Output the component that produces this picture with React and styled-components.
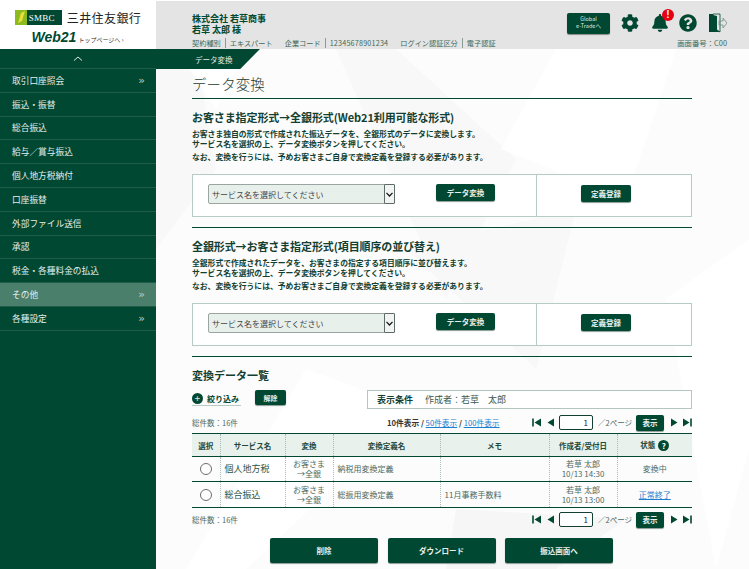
import React from "react";
import styled, { createGlobalStyle } from "styled-components";
import { FaCog, FaBell, FaQuestionCircle } from "react-icons/fa";

const GREEN = "#004831";

const Global = createGlobalStyle`
  html, body { margin: 0; padding: 0; height: 100%; overflow: hidden; }
  body { font-family: "Noto Sans CJK JP", "Noto Sans", sans-serif; color: ${GREEN}; background: #fff; }
  * { box-sizing: border-box; }
`;

const Page = styled.div`
  display: grid;
  grid-template-columns: 156px 1fr;
  grid-template-rows: 49px 1fr;
  width: 749px;
  height: 569px;
  overflow: hidden;
`;

const LogoBox = styled.div`
  display: flex;
  flex-direction: column;
  align-items: center;
  padding-top: 10px;
  background: #fff;
`;

const LogoRow = styled.div`
  display: flex;
  align-items: center;
  gap: 5px;
  height: 15px;
`;

const SmbcMark = styled.div`
  display: flex;
  align-items: center;
  width: 47px;
  height: 15px;
  background: ${GREEN};
  color: #fff;
  font-family: "Liberation Serif", serif;
  font-size: 9px;
  letter-spacing: 0.2px;
`;

const BankName = styled.span`
  font-size: 12px;
  font-weight: 400;
  letter-spacing: 0.4px;
  color: #222;
`;

const WebRow = styled.div`
  display: flex;
  align-items: baseline;
  gap: 2px;
  margin-top: 5px;
  margin-left: -1px;
`;

const WebLogo = styled.span`
  font-family: "Liberation Sans", sans-serif;
  font-size: 14px;
  line-height: 15px;
  font-weight: 700;
  font-style: italic;
  color: ${GREEN};
`;

const TopLink = styled.span`
  font-size: 6px;
  color: #333;
`;

const Header = styled.header`
  display: flex;
  justify-content: space-between;
  margin-top: 1px;
  padding: 12px 7px 0 36px;
  background: #e4e4e4;
`;

const Account = styled.div`
  display: flex;
  flex-direction: column;
`;

const Company = styled.div`
  font-size: 9px;
  line-height: 11px;
  font-weight: 700;
  color: ${GREEN};
`;

const MetaRow = styled.div`
  display: flex;
  align-items: center;
  margin-top: 3px;
  font-size: 7.2px;
  line-height: 10px;
  color: #3d6a5a;
  white-space: nowrap;
`;

const MetaItem = styled.span`
  margin-right: ${(p) => p.$gap || 4}px;
  padding-right: ${(p) => (p.$sep ? 4 : 0)}px;
  border-right: ${(p) => (p.$sep ? "1px solid #8a9a94" : "none")};
  letter-spacing: ${(p) => p.$track || 0}px;
`;

const HeaderRight = styled.div`
  display: flex;
  flex-direction: column;
  align-items: flex-end;
`;

const IconRow = styled.div`
  display: flex;
  align-items: center;
  height: 22px;
  margin-top: -1px;
  margin-right: 15px;
`;

const GlobalButton = styled.div`
  width: 43px;
  height: 21px;
  margin-right: 11px;
  padding-top: 3px;
  border-radius: 2px;
  background: ${GREEN};
  box-shadow: 0 1px 1px #888;
  color: #dfe8e4;
  font-size: 5.5px;
  line-height: 7px;
  text-align: center;
`;

const HeadIcon = styled.span`
  position: relative;
  display: flex;
  margin-right: ${(p) => p.$gap}px;
  color: ${GREEN};
  font-size: ${(p) => p.$size}px;
`;

const Badge = styled.span`
  position: absolute;
  top: -5px;
  right: -5px;
  width: 12px;
  height: 12px;
  border-radius: 50%;
  background: #e60012;
  color: #fff;
  font-family: "Liberation Sans", sans-serif;
  font-size: 10px;
  line-height: 12px;
  font-weight: 700;
  text-align: center;
`;

const ScreenNo = styled.div`
  margin-top: 4px;
  margin-right: 15px;
  font-size: 7.4px;
  line-height: 10px;
  color: #3d6a5a;
`;

const Sidebar = styled.nav`
  background: ${GREEN};
  height: 520px;
`;

const Collapse = styled.div`
  display: flex;
  align-items: center;
  justify-content: center;
  height: 20px;
  border-bottom: 1px solid #1e5c48;
`;

const MenuItem = styled.div`
  display: flex;
  align-items: center;
  justify-content: space-between;
  height: 23.8px;
  padding: 0 11px 0 12px;
  border-bottom: 1px solid #1e5c48;
  background: ${(p) => (p.$active ? "#4a7f6b" : "transparent")};
  color: #e6eeea;
  font-size: 8.7px;
`;

const Chevron = styled.span`
  color: #b9cdc5;
  font-family: "DejaVu Sans", sans-serif;
  font-size: 11px;
  line-height: 11px;
`;

const Main = styled.main`
  position: relative;
  height: 520px;
  overflow: hidden;
  background: #fcfcfc;
`;

const Backdrop = styled.svg`
  position: absolute;
  inset: 0;
  width: 100%;
  height: 100%;
`;

const CrumbBar = styled.div`
  position: relative;
  display: flex;
  align-items: center;
  width: 104px;
  height: 20px;
  padding-left: 39px;
  background: ${GREEN};
  clip-path: polygon(0 0, 100% 0, 81% 100%, 0 100%);
  color: #e6eeea;
  font-size: 7.5px;
`;

const Content = styled.div`
  position: relative;
  padding: 0 57px 0 36px;
`;

const PageTitle = styled.h1`
  height: 30px;
  margin: 0;
  border-bottom: 1px solid ${GREEN};
  color: #1d3d33;
  font-size: 14.4px;
  font-weight: 300;
  line-height: 30px;
  letter-spacing: 0.2px;
`;

const SectionTitle = styled.h2`
  margin: ${(p) => p.$top}px 0 0;
  font-size: 11px;
  font-weight: 700;
  line-height: 14px;
  letter-spacing: -0.1px;
  color: #123f31;
`;

const Notes = styled.div`
  margin-top: 5px;
  font-size: 7.8px;
  font-weight: 700;
  line-height: 9.5px;
  color: #123f31;
  white-space: nowrap;
`;

const NoteGap = styled.div`
  margin-top: 4px;
`;

const ActionPanel = styled.div`
  display: grid;
  grid-template-columns: 344px 1fr;
  height: 43px;
  margin-top: 12.5px;
  border: 1px solid #b5cbc3;
  background: #fff;
`;

const PanelLeft = styled.div`
  display: flex;
  align-items: flex-start;
  padding: 9px 0 0 15px;
  border-right: 1px solid #b5cbc3;
`;

const SelectWrap = styled.div`
  position: relative;
  width: 187px;
  height: 20px;
  margin-right: 41px;
`;

const ServiceSelect = styled.select`
  display: block;
  width: 100%;
  height: 100%;
  padding-left: 3px;
  appearance: none;
  border: 1px solid #9aa5a1;
  border-radius: 2px;
  background: #e8f0ec;
  color: #444;
  font-family: inherit;
  font-size: 8px;
`;

const SelectArrow = styled.span`
  position: absolute;
  top: 0;
  right: 0;
  display: flex;
  align-items: center;
  justify-content: center;
  width: 11px;
  height: 20px;
  border: 1px solid #5f6b67;
  border-radius: 1px;
  background: #f1f4f2;
  pointer-events: none;
`;

const PanelRight = styled.div`
  display: flex;
  justify-content: center;
  padding: 10px 16px 0 0;
`;

const Btn = styled.button`
  display: block;
  flex: none;
  width: ${(p) => p.$w}px;
  height: ${(p) => p.$h || 17}px;
  padding: 0;
  border: none;
  border-radius: 2px;
  background: ${GREEN};
  box-shadow: 0 1px 1px #8b9a95;
  color: #e8efec;
  font-family: inherit;
  font-size: ${(p) => p.$size || 7.5}px;
  font-weight: 700;
`;

const Divider = styled.div`
  margin-top: ${(p) => p.$top}px;
  border-top: 1px solid ${GREEN};
`;

const ListTitle = styled.h2`
  margin: 11px 0 0;
  color: #123f31;
  font-size: 11px;
  font-weight: 700;
  line-height: 14px;
`;

const FilterRow = styled.div`
  display: flex;
  align-items: flex-start;
  margin-top: 8px;
`;

const FilterToggle = styled.div`
  display: flex;
  flex: none;
  align-items: center;
  gap: 4px;
  width: 49px;
  height: 15px;
  margin: 1px 14px 0 0;
  border-bottom: 1px solid #b5cbc3;
  font-size: 8px;
  font-weight: 700;
  white-space: nowrap;
`;

const PlusDot = styled.span`
  display: flex;
  flex: none;
  align-items: center;
  justify-content: center;
  width: 11px;
  height: 11px;
  border-radius: 50%;
  background: ${GREEN};
  color: #c5d6cf;
  font-size: 9px;
  line-height: 11px;
`;

const Conditions = styled.div`
  display: flex;
  flex: none;
  align-items: center;
  width: 325px;
  height: 19px;
  margin-left: 81px;
  padding-left: 9px;
  border: 1px solid #b5c5bf;
  background: #fff;
  color: #3d5a50;
  font-size: 9px;
`;

const ConditionsLabel = styled.strong`
  margin-right: 12px;
  color: #123f31;
  font-weight: 700;
`;

const PagerRow = styled.div`
  display: flex;
  align-items: center;
  height: 17px;
  margin-top: ${(p) => p.$top}px;
`;

const Total = styled.span`
  flex: none;
  width: 195px;
  color: #4d6a5f;
  font-size: 7.5px;
`;

const SizeLinks = styled.span`
  color: #333;
  font-size: 7.7px;
  font-weight: ${(p) => (p.$bold ? 700 : 400)};
  white-space: nowrap;
`;

const BlueLink = styled.a`
  color: #1a7fd0;
  font-weight: 400;
  text-decoration: underline;
`;

const Pager = styled.div`
  display: flex;
  align-items: center;
  margin-left: auto;
`;

const PageInput = styled.div`
  width: 34px;
  height: 15px;
  margin-right: 5px;
  padding-right: 4px;
  border: 1px solid #123f31;
  border-radius: 2px;
  background: #fff;
  color: #222;
  font-size: 8px;
  line-height: 13px;
  text-align: right;
`;

const PageCount = styled.span`
  width: 38px;
  color: #4d6a5f;
  font-size: 7.5px;
  white-space: nowrap;
`;

const DataTable = styled.table`
  width: 500px;
  margin-top: 2px;
  border-collapse: collapse;
  table-layout: fixed;
  border-top: 1px solid ${GREEN};
  border-bottom: 1px solid ${GREEN};
`;

const HeadCell = styled.th`
  height: 23px;
  padding: 0;
  border-bottom: 1px solid ${GREEN};
  border-left: 1px dotted #a9bdb5;
  background: #e9f1ed;
  color: #1f4a3c;
  font-size: 7.5px;
  font-weight: 700;
  &:first-child { border-left: none; }
`;

const Cell = styled.td`
  height: ${(p) => p.$h}px;
  padding: ${(p) => (p.$left ? "0 0 0 4px" : "0")};
  border-left: 1px dotted #a9bdb5;
  border-bottom: 1px solid ${GREEN};
  color: ${(p) => (p.$strong ? "#2a5546" : "#4d6a5f")};
  font-size: ${(p) => (p.$strong ? 9 : 8)}px;
  line-height: 10px;
  text-align: ${(p) => (p.$left ? "left" : "center")};
  &:first-child { border-left: none; }
`;

const Radio = styled.span`
  display: block;
  width: 12px;
  height: 12px;
  margin: 0 auto;
  border: 1px solid #6c6c6c;
  border-radius: 50%;
  background: #fff;
`;

const HelpDot = styled.span`
  display: inline-block;
  width: 11px;
  height: 11px;
  margin-left: 3px;
  border-radius: 50%;
  background: ${GREEN};
  color: #fff;
  font-size: 8px;
  line-height: 11px;
  vertical-align: middle;
`;

const Footer = styled.div`
  display: flex;
  gap: 9.5px;
  margin: 10px 0 0 78px;
`;

const menu = [
  "取引口座照会", "振込・振替", "総合振込", "給与／賞与振込", "個人地方税納付", "口座振替",
  "外部ファイル送信", "承認", "税金・各種料金の払込", "その他", "各種設定",
];
const withChevron = ["取引口座照会", "その他", "各種設定"];

const columns = [28, 65, 48, 107, 109, 68, 75];

function ArrowRight({ bar }) {
  return (
    <svg width={bar ? 9 : 7} height="9" viewBox={bar ? "0 0 9 9" : "0 0 7 9"} style={{ margin: "0 0 0 5px" }}>
      <polygon points="0,0.5 6.5,4.5 0,8.5" fill={GREEN} />
      {bar && <rect x="7.2" y="0.5" width="1.6" height="8" fill={GREEN} />}
    </svg>
  );
}

function ArrowLeft({ bar }) {
  return (
    <svg width={bar ? 10 : 7} height="9" viewBox={bar ? "0 0 10 9" : "0 0 7 9"} style={{ margin: "0 5px 0 0" }}>
      {bar && <rect x="0.2" y="0.5" width="1.6" height="8" fill={GREEN} />}
      <polygon points={bar ? "9,0.5 2.5,4.5 9,8.5" : "7,0.5 0.5,4.5 7,8.5"} fill={GREEN} />
    </svg>
  );
}

function PagerControls() {
  return (
    <Pager>
      <ArrowLeft bar />
      <ArrowLeft />
      <PageInput>1</PageInput>
      <PageCount>／2ページ</PageCount>
      <Btn $w={28} $h={16}>表示</Btn>
      <span style={{ width: 2 }} />
      <ArrowRight />
      <ArrowRight bar />
    </Pager>
  );
}

function ConvertPanel() {
  return (
    <ActionPanel>
      <PanelLeft>
        <SelectWrap>
          <ServiceSelect defaultValue="">
            <option value="">サービス名を選択してください</option>
          </ServiceSelect>
          <SelectArrow>
            <svg width="7" height="5" viewBox="0 0 7 5">
              <path d="M0.5 0.8 3.5 4l3-3.2" fill="none" stroke="#111" strokeWidth="1.2" />
            </svg>
          </SelectArrow>
        </SelectWrap>
        <Btn $w={59}>データ変換</Btn>
      </PanelLeft>
      <PanelRight>
        <Btn $w={50}>定義登録</Btn>
      </PanelRight>
    </ActionPanel>
  );
}

export default function App() {
  return (
    <Page>
      <Global />
      <LogoBox>
        <LogoRow>
          <SmbcMark>
            <svg width="12" height="15" viewBox="0 0 12 15">
              <rect width="12" height="15" fill="#8dbb1f" />
              <polygon points="3,13 6,3 10,1 7,11" fill="#e8dd3a" />
            </svg>
            <span style={{ marginLeft: 2 }}>SMBC</span>
          </SmbcMark>
          <BankName>三井住友銀行</BankName>
        </LogoRow>
        <WebRow>
          <WebLogo>Web21</WebLogo>
          <TopLink>トップページへ ›</TopLink>
        </WebRow>
      </LogoBox>
      <Header>
        <Account>
          <Company>株式会社 若草商事<br />若草 太郎 様</Company>
          <MetaRow>
            <MetaItem $sep>契約種別</MetaItem>
            <MetaItem $gap={12}>エキスパート</MetaItem>
            <MetaItem $sep>企業コード</MetaItem>
            <MetaItem $gap={12} $track={0.2}>12345678901234</MetaItem>
            <MetaItem $sep>ログイン認証区分</MetaItem>
            <MetaItem>電子認証</MetaItem>
          </MetaRow>
        </Account>
        <HeaderRight>
          <IconRow>
            <GlobalButton>Global<br />e-Tradeへ</GlobalButton>
            <HeadIcon $size={18} $gap={12}><FaCog /></HeadIcon>
            <HeadIcon $size={18} $gap={10}>
              <FaBell />
              <Badge>!</Badge>
            </HeadIcon>
            <HeadIcon $size={18} $gap={12}><FaQuestionCircle /></HeadIcon>
            <svg width="18" height="20" viewBox="0 0 18 20">
              <polygon points="0,1 11,1 11,19 0,19" fill={GREEN} />
              <polygon points="4,1 11,1 11,19 8,17 4,15" fill="#e4e4e4" stroke={GREEN} strokeWidth="0.8" />
              <polygon points="0,1 8,3 8,19 0,19" fill={GREEN} />
              <path d="M10 8h4V5l4 5-4 5v-3h-4z" fill="none" stroke="#6f8f83" strokeWidth="0.8" />
            </svg>
          </IconRow>
          <ScreenNo>画面番号：C00</ScreenNo>
        </HeaderRight>
      </Header>
      <Sidebar>
        <Collapse>
          <svg width="10" height="5" viewBox="0 0 10 5">
            <path d="M1 4.5 5 1l4 3.5" fill="none" stroke="#dfe8e4" strokeWidth="1" />
          </svg>
        </Collapse>
        {menu.map((item) => (
          <MenuItem key={item} $active={item === "その他"}>
            {item}
            {withChevron.includes(item) && <Chevron>»</Chevron>}
          </MenuItem>
        ))}
      </Sidebar>
      <Main>
        <Backdrop viewBox="0 0 593 520" preserveAspectRatio="none">
          <polygon points="0,20 40,0 60,120 0,200" fill="#f8f8f8" />
          <polygon points="180,0 240,0 360,110 290,250" fill="#f8f8f8" />
          <polygon points="345,100 400,0 520,0 470,150" fill="#ffffff" />
          <polygon points="150,320 260,360 90,520 30,520" fill="#ffffff" />
          <polygon points="510,250 593,190 593,400 560,520" fill="#ffffff" />
          <polygon points="20,0 90,0 60,60" fill="#ffffff" />
          <polygon points="250,200 420,160 380,320" fill="#f8f8f8" />
          <polygon points="300,460 470,470 400,520 290,520" fill="#f6f6f6" />
        </Backdrop>
        <CrumbBar>データ変換</CrumbBar>
        <Content>
          <PageTitle>データ変換</PageTitle>
          <SectionTitle $top={11}>お客さま指定形式→全銀形式(Web21利用可能な形式)</SectionTitle>
          <Notes>
            お客さま独自の形式で作成された振込データを、全銀形式のデータに変換します。<br />
            サービス名を選択の上、データ変換ボタンを押してください。
            <NoteGap>なお、変換を行うには、予めお客さまご自身で変換定義を登録する必要があります。</NoteGap>
          </Notes>
          <ConvertPanel />
          <Divider $top={10} />
          <SectionTitle $top={11}>全銀形式→お客さま指定形式(項目順序の並び替え)</SectionTitle>
          <Notes>
            全銀形式で作成されたデータを、お客さまの指定する項目順序に並び替えます。<br />
            サービス名を選択の上、データ変換ボタンを押してください。
            <NoteGap>なお、変換を行うには、予めお客さまご自身で変換定義を登録する必要があります。</NoteGap>
          </Notes>
          <ConvertPanel />
          <Divider $top={10} />
          <ListTitle>変換データ一覧</ListTitle>
          <FilterRow>
            <FilterToggle><PlusDot>+</PlusDot>絞り込み</FilterToggle>
            <Btn $w={31} $h={15} $size={7}>解除</Btn>
            <Conditions>
              <ConditionsLabel>表示条件</ConditionsLabel>
              作成者：若草　太郎
            </Conditions>
          </FilterRow>
          <PagerRow $top={5}>
            <Total>総件数：16件</Total>
            <SizeLinks $bold>
              10件表示 / <BlueLink>50件表示</BlueLink> / <BlueLink>100件表示</BlueLink>
            </SizeLinks>
            <PagerControls />
          </PagerRow>
          <DataTable>
            <colgroup>
              {columns.map((w, i) => <col key={i} style={{ width: w }} />)}
            </colgroup>
            <thead>
              <tr>
                <HeadCell>選択</HeadCell>
                <HeadCell>サービス名</HeadCell>
                <HeadCell>変換</HeadCell>
                <HeadCell>変換定義名</HeadCell>
                <HeadCell>メモ</HeadCell>
                <HeadCell>作成者/受付日</HeadCell>
                <HeadCell>状態<HelpDot>?</HelpDot></HeadCell>
              </tr>
            </thead>
            <tbody>
              <tr>
                <Cell $h={25}><Radio /></Cell>
                <Cell $h={25} $left $strong>個人地方税</Cell>
                <Cell $h={25}>お客さま<br />→全銀</Cell>
                <Cell $h={25} $left>納税用変換定義</Cell>
                <Cell $h={25} $left />
                <Cell $h={25}>若草 太郎<br />10/13 14:30</Cell>
                <Cell $h={25}>変換中</Cell>
              </tr>
              <tr>
                <Cell $h={26}><Radio /></Cell>
                <Cell $h={26} $left $strong>総合振込</Cell>
                <Cell $h={26}>お客さま<br />→全銀</Cell>
                <Cell $h={26} $left>総振用変換定義</Cell>
                <Cell $h={26} $left>11月事務手数料</Cell>
                <Cell $h={26}>若草 太郎<br />10/13 13:00</Cell>
                <Cell $h={26}><BlueLink>正常終了</BlueLink></Cell>
              </tr>
            </tbody>
          </DataTable>
          <PagerRow $top={3}>
            <Total>総件数：16件</Total>
            <PagerControls />
          </PagerRow>
          <Footer>
            <Btn $w={108} $h={25}>削除</Btn>
            <Btn $w={108} $h={25}>ダウンロード</Btn>
            <Btn $w={108} $h={25}>振込画面へ</Btn>
          </Footer>
        </Content>
      </Main>
    </Page>
  );
}
